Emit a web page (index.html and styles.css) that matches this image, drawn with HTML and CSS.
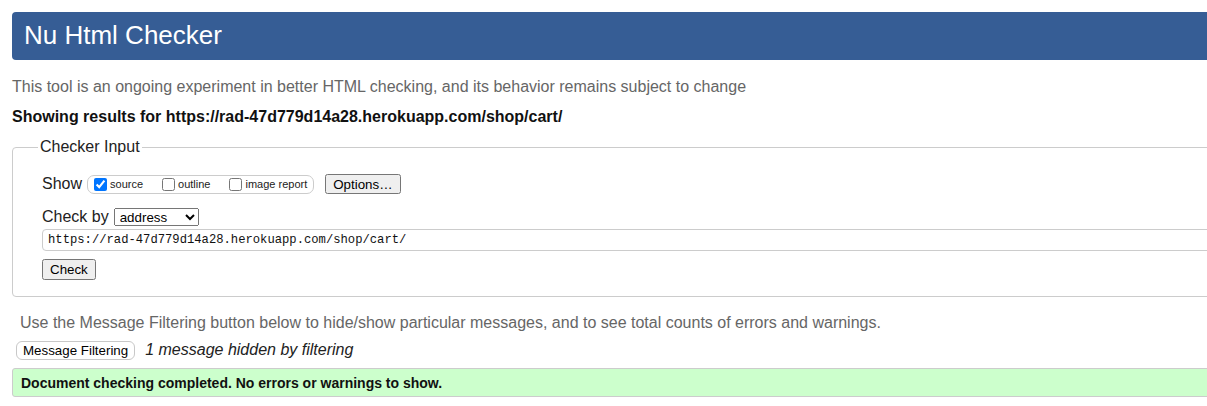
FILE: index.html
```html
<!DOCTYPE html>
<html lang="en">
<head>
<meta charset="utf-8">
<title>Nu Html Checker</title>
<link rel="stylesheet" href="styles.css">
</head>
<body>
<div class="page">
  <h1 class="title">Nu Html Checker</h1>
  <p class="intro">This tool is an ongoing experiment in better HTML checking, and its behavior remains subject to change</p>
  <p class="results">Showing results for https://rad-47d779d14a28.herokuapp.com/shop/cart/</p>
  <form class="checker">
    <fieldset class="input-set">
      <legend class="input-legend">Checker Input</legend>
      <div class="show-row">
        <span class="label">Show</span>
        <span class="show-group">
          <label class="opt"><input class="cb" type="checkbox" checked>source</label>
          <label class="opt"><input class="cb" type="checkbox">outline</label>
          <label class="opt"><input class="cb" type="checkbox">image report</label>
        </span>
        <button type="button" class="btn">Options…</button>
      </div>
      <div class="by-row">
        <span class="label">Check by</span>
        <select class="by-select"><option>address</option><option>file upload</option><option>text input</option></select>
      </div>
      <div class="url-row"><input class="url" type="text" value="https://rad-47d779d14a28.herokuapp.com/shop/cart/"></div>
      <div class="submit-row"><button type="button" class="btn">Check</button></div>
    </fieldset>
  </form>
  <p class="filter-note">Use the Message Filtering button below to hide/show particular messages, and to see total counts of errors and warnings.</p>
  <div class="filter-row">
    <button type="button" class="filter-btn">Message Filtering</button>
    <span class="hidden-count">1 message hidden by filtering</span>
  </div>
  <div class="success">Document checking completed. No errors or warnings to show.</div>
</div>
</body>
</html>
```

FILE: styles.css
```css
html {
  overflow: hidden;
}

body {
  margin: 0;
  font-family: "Liberation Sans", Arial, sans-serif;
  color: #222;
  background: #fff;
}

.page {
  width: 1240px;
  padding: 12px;
}

.title {
  margin: 0;
  height: 48px;
  background: #365d95;
  color: #fff;
  border-radius: 4px;
  font-size: 26px;
  font-weight: normal;
  line-height: 46px;
  padding: 0 12px;
}

.intro {
  margin: 18px 0 0;
  font-size: 16px;
  line-height: 18px;
  color: #666;
}

.results {
  margin: 12px 0 0;
  font-size: 16px;
  line-height: 18px;
  font-weight: bold;
  color: #111;
}

.checker {
  margin: 0;
}

.input-set {
  margin: 12px 0 0;
  padding: 18px 16px 16px 29px;
  border: 1px solid #ccc;
  border-radius: 4px;
  min-width: 0;
}

.input-legend {
  margin-left: -4px;
  padding: 0 2px;
  font-size: 16px;
  line-height: 18px;
  color: #222;
}

.label {
  font-size: 16px;
  line-height: 18px;
  color: #222;
}

.show-row {
  display: flex;
  align-items: center;
  height: 20px;
}

.show-group {
  display: flex;
  align-items: center;
  margin-left: 5px;
  height: 17px;
  padding: 0 6px 0 2px;
  border: 1px solid #ccc;
  border-radius: 7px;
  font-size: 11px;
  color: #222;
}

.opt {
  display: flex;
  align-items: center;
  margin-right: 15px;
}

.opt:last-child {
  margin-right: 0;
}

.cb {
  width: 13px;
  height: 13px;
  margin: 0 3px 0 4px;
}

.btn {
  margin-left: 11px;
  font-family: "Liberation Sans", Arial, sans-serif;
  font-size: 13.33px;
  padding: 1px 6px;
  height: 20px;
  color: #000;
}

.submit-row .btn {
  margin-left: 0;
  height: 21px;
}

.by-row {
  display: flex;
  align-items: center;
  margin-top: 14px;
  height: 18px;
}

.by-select {
  margin-left: 5px;
  width: 85px;
  height: 18px;
  font-family: "Liberation Sans", Arial, sans-serif;
  font-size: 13.33px;
  padding: 0 0 0 1px;
  color: #000;
}

.url-row {
  margin-top: 3px;
}

.url {
  display: block;
  box-sizing: border-box;
  width: 100%;
  height: 22px;
  margin: 0;
  padding: 0 5px;
  border: 1px solid #ccc;
  border-radius: 4px;
  font-family: "Liberation Mono", "DejaVu Sans Mono", monospace;
  font-size: 12.2px;
  color: #111;
}

.submit-row {
  margin-top: 8px;
  display: flex;
}

.filter-note {
  margin: 17px 0 0;
  padding-left: 8px;
  font-size: 16px;
  line-height: 18px;
  color: #666;
}

.filter-row {
  display: flex;
  align-items: center;
  gap: 10px;
  margin-top: 8px;
  padding-left: 4px;
  height: 20px;
}

.filter-btn {
  height: 19px;
  padding: 0 6px;
  border: 1px solid #c8c8c8;
  border-radius: 6px;
  background: #fff;
  font-family: "Liberation Sans", Arial, sans-serif;
  font-size: 13.33px;
  color: #000;
}

.hidden-count {
  font-size: 16px;
  font-style: italic;
  color: #222;
}

.success {
  margin-top: 8px;
  height: 27px;
  padding: 0 8px;
  border: 1px solid #ccc;
  border-radius: 3px;
  background: #ccffcc;
  font-size: 14px;
  line-height: 28px;
  font-weight: bold;
  color: #111;
}
```
